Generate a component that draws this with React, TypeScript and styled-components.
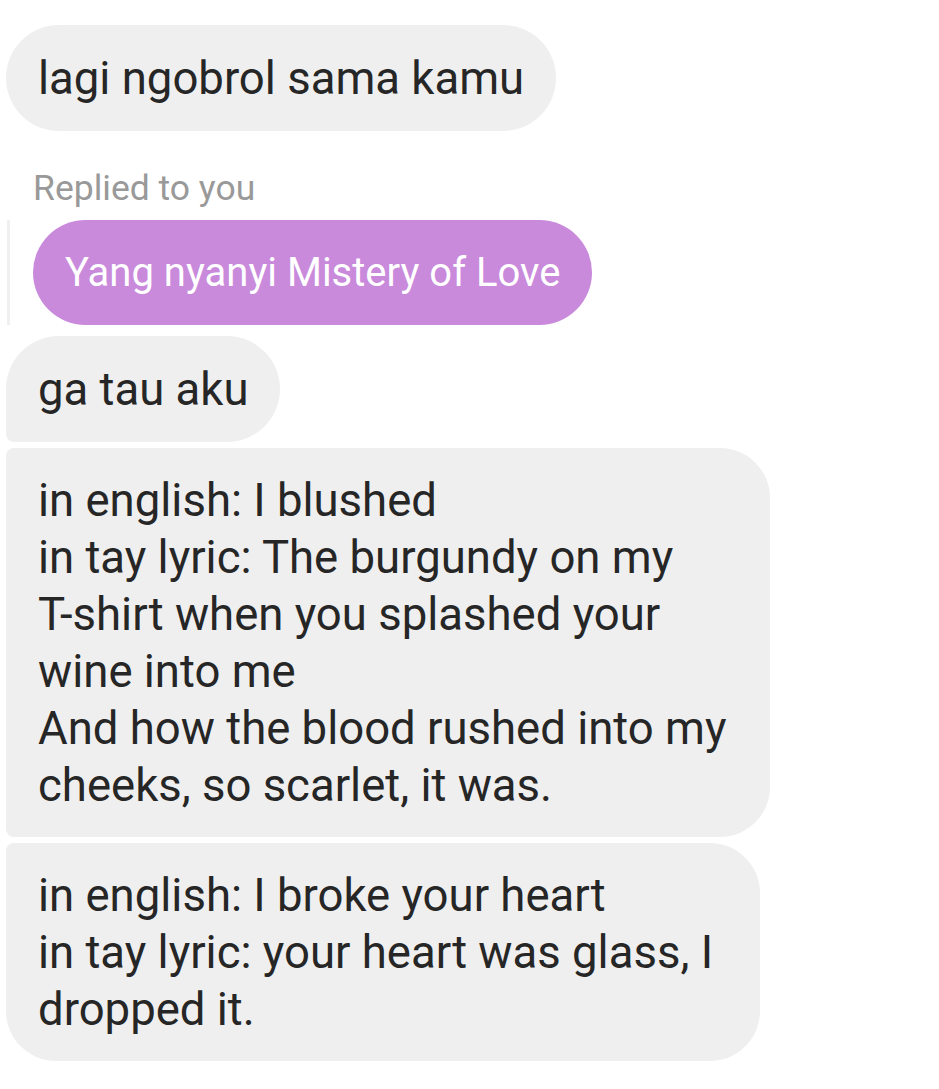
import React from "react";
import styled, { createGlobalStyle } from "styled-components";

const Global = createGlobalStyle`
  html, body { margin: 0; padding: 0; background: #ffffff; }
  body { font-family: Roboto, "Noto Sans", sans-serif; }
`;

const Thread = styled.div`
  display: flex;
  flex-direction: column;
  align-items: flex-start;
  padding: 25px 0 0 6px;
`;

type Corners = { tl: number; tr: number; br: number; bl: number };

const Bubble = styled.div<{ $c: Corners; $w?: number; $mt?: number; $py?: number }>`
  box-sizing: border-box;
  background: #efefef;
  color: #262626;
  font-family: Roboto, sans-serif;
  font-size: 45.5px;
  line-height: 57px;
  padding: ${(p) => p.$py ?? 23.5}px 32px;
  width: ${(p) => (p.$w ? `${p.$w}px` : "auto")};
  margin-top: ${(p) => p.$mt ?? 6}px;
  border-radius: ${(p) => `${p.$c.tl}px ${p.$c.tr}px ${p.$c.br}px ${p.$c.bl}px`};
  white-space: nowrap;
`;

const RepliedLabel = styled.div`
  margin: 36px 0 0 27px;
  font-family: Roboto, sans-serif;
  font-size: 35.5px;
  line-height: 42px;
  color: #999999;
`;

const ReplyRow = styled.div`
  display: flex;
  align-items: stretch;
  gap: 23px;
  margin-top: 11px;
`;

const ReplyBar = styled.div`
  width: 3px;
  margin-left: 1px;
  background: #f0f0f3;
`;

const ReplyBubble = styled.div`
  background: #c98adc;
  color: #ffffff;
  font-family: Roboto, sans-serif;
  font-size: 40px;
  line-height: 57px;
  padding: 24px 32px;
  border-radius: 53px;
  white-space: nowrap;
`;

const full = 53;
const small = 8;

export default function App() {
  return (
    <>
      <Global />
      <Thread>
        <Bubble $c={{ tl: full, tr: full, br: full, bl: full }} $mt={0} $py={24.5}>
          lagi ngobrol sama kamu
        </Bubble>
        <RepliedLabel>Replied to you</RepliedLabel>
        <ReplyRow>
          <ReplyBar />
          <ReplyBubble>Yang nyanyi Mistery of Love</ReplyBubble>
        </ReplyRow>
        <Bubble $c={{ tl: full, tr: full, br: full, bl: small }} $mt={11} $py={24.5}>
          ga tau aku
        </Bubble>
        <Bubble $c={{ tl: small, tr: 50, br: 50, bl: small }} $w={764} $mt={6}>
          in english: I blushed
          <br />
          in tay lyric: The burgundy on my
          <br />
          T-shirt when you splashed your
          <br />
          wine into me
          <br />
          And how the blood rushed into my
          <br />
          cheeks, so scarlet, it was.
        </Bubble>
        <Bubble $c={{ tl: small, tr: 50, br: 50, bl: 50 }} $w={754} $mt={6}>
          in english: I broke your heart
          <br />
          in tay lyric: your heart was glass, I
          <br />
          dropped it.
        </Bubble>
      </Thread>
    </>
  );
}
